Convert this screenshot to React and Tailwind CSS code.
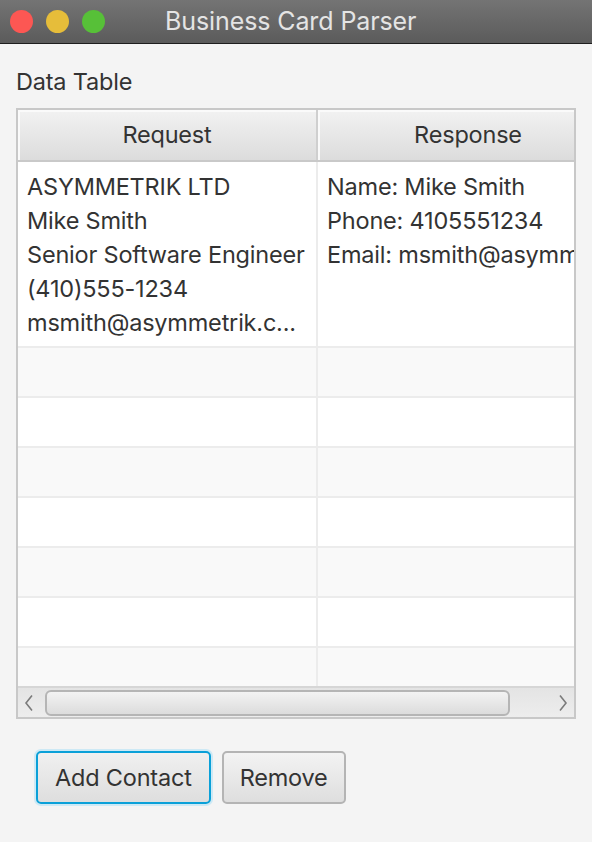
const rows = [
  {
    request: ['ASYMMETRIK LTD', 'Mike Smith', 'Senior Software Engineer', '(410)555-1234', 'msmith@asymmetrik.c...'],
    response: ['Name: Mike Smith', 'Phone: 4105551234', 'Email: msmith@asymmetrik.com'],
  },
];

const emptyRows = [1, 2, 3, 4, 5, 6, 7];

const Chevron = ({ dir }) => (
  <svg width="10" height="18" viewBox="0 0 10 18" className="shrink-0">
    <polyline
      points={dir === 'left' ? '8,1.5 2,9 8,16.5' : '2,1.5 8,9 2,16.5'}
      fill="none"
      stroke="#7b7b7b"
      strokeWidth="1.6"
    />
  </svg>
);

const App = () => {
  return (
    <div className="w-[592px] h-[842px] bg-[#f4f4f4] flex flex-col text-[#333333] overflow-hidden" style={{ fontFamily: 'Inter, "Noto Sans", sans-serif' }}>
      {/* Title bar */}
      <div className="h-[44px] shrink-0 flex items-center bg-gradient-to-b from-[#747474] to-[#5b5b5b] border-b border-[#1e1e1e]">
        <div className="flex items-center gap-[13px] pl-[10px]">
          <span className="w-[23px] h-[23px] rounded-full bg-[#fc5753]" />
          <span className="w-[23px] h-[23px] rounded-full bg-[#e6bd3a]" />
          <span className="w-[23px] h-[23px] rounded-full bg-[#57c038]" />
        </div>
        <div className="ml-[60px] text-[25px] text-[#e4e4e4] tracking-[-0.1px]">Business Card Parser</div>
      </div>

      <div className="px-[16px] pt-[24px]">
        <div className="text-[23.5px] leading-[28px] mb-[12px] tracking-[-0.2px]">Data Table</div>

        {/* Table */}
        <div className="w-[560px] h-[611px] border-2 border-[#c8c8c8] bg-[#f9f9f9] flex flex-col overflow-hidden">
          <div className="flex-1 overflow-hidden">
            <div className="w-[602px] text-[23.5px] tracking-[-0.2px]">
              {/* Header */}
              <div className="flex h-[52px] border-b-2 border-[#c9c9c9] bg-gradient-to-b from-[#f2f2f2] to-[#dcdcdc] shadow-[inset_2px_2px_0_#fafafa]">
                <div className="w-[300px] flex items-center justify-center border-r-2 border-[#cfcfcf]">Request</div>
                <div className="w-[300px] flex items-center justify-center shadow-[inset_2px_2px_0_#fafafa]">Response</div>
              </div>

              {rows.map((row, i) => (
                <div key={i} className="flex h-[186px] bg-white border-b-2 border-[#ececec]">
                  <div className="w-[300px] pl-[9px] pt-[8px] border-r-2 border-[#ececec] leading-[34px] whitespace-nowrap overflow-hidden">
                    {row.request.map(line => <div key={line}>{line}</div>)}
                  </div>
                  <div className="w-[300px] pl-[9px] pt-[8px] leading-[34px] whitespace-nowrap overflow-hidden">
                    {row.response.map(line => <div key={line}>{line}</div>)}
                  </div>
                </div>
              ))}

              {emptyRows.map(n => (
                <div key={n} className={`flex h-[50px] border-b-2 border-[#ececec] ${n % 2 === 1 ? 'bg-[#f9f9f9]' : 'bg-white'}`}>
                  <div className="w-[300px] border-r-2 border-[#ececec]" />
                  <div className="w-[300px]" />
                </div>
              ))}
            </div>
          </div>

          {/* Horizontal scrollbar */}
          <div className="h-[31px] shrink-0 border-t-2 border-[#d6d6d6] bg-gradient-to-b from-[#e4e4e4] to-[#ededed] flex items-center px-[6px]">
            <Chevron dir="left" />
            <div className="ml-[11px] w-[465px] h-[26px] rounded-[6px] border-2 border-[#b5b5b5] bg-gradient-to-b from-[#f3f3f3] to-[#dcdcdc]" />
            <div className="flex-1" />
            <Chevron dir="right" />
          </div>
        </div>

        {/* Buttons */}
        <div className="flex gap-[11px] pl-[20px] mt-[32px]">
          <button className="h-[53px] px-[17px] rounded-[5px] border-2 border-[#0aa0d8] ring-2 ring-[#cde9f5] bg-gradient-to-b from-[#f0f0f0] to-[#dedede] text-[23.5px] tracking-[-0.2px] text-[#333333]">
            Add Contact
          </button>
          <button className="h-[53px] px-[16px] rounded-[5px] border-2 border-[#b4b4b4] bg-gradient-to-b from-[#f3f3f3] to-[#dedede] text-[23.5px] tracking-[-0.2px] text-[#333333]">
            Remove
          </button>
        </div>
      </div>
    </div>
  );
};

export default App;
